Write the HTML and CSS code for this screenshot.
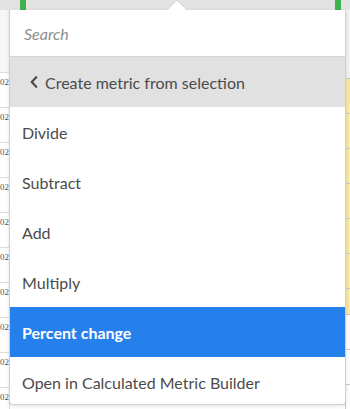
FILE: index.html
```html
<!DOCTYPE html>
<html>
<head>
<meta charset="utf-8">
<link rel="stylesheet" href="styles.css">
</head>
<body>
<div class="backdrop">
  <div class="topstrip">
    <span class="flag flag-left"></span>
    <span class="flag flag-right"></span>
  </div>
  <div class="table">
    <div class="col col-left">
      <div class="cell first"></div>
      <div class="cell"><span>02</span></div>
      <div class="cell"><span>02</span></div>
      <div class="cell"><span>02</span></div>
      <div class="cell"><span>02</span></div>
      <div class="cell"><span>02</span></div>
      <div class="cell"><span>02</span></div>
      <div class="cell"><span>02</span></div>
      <div class="cell"><span>02</span></div>
      <div class="cell"><span>02</span></div>
      <div class="cell"><span>02</span></div>
    </div>
    <div class="col col-right">
      <div class="rcell first"></div>
      <div class="rcell yellow"></div>
      <div class="rcell yellow"></div>
      <div class="rcell yellow"></div>
      <div class="rcell yellow"></div>
      <div class="rcell yellow"></div>
      <div class="rcell yellow"></div>
      <div class="rcell yellow short"></div>
      <div class="rcell"></div>
      <div class="rcell"></div>
    </div>
  </div>
</div>

<svg class="caret" width="22" height="12" viewBox="0 0 22 12">
  <polygon points="0.5,11.5 11,1 21.5,11.5" fill="#ffffff" stroke="#d0d0d0" stroke-width="1"/>
  <rect x="0" y="11" width="22" height="1" fill="#ffffff"/>
</svg>

<div class="popover">
  <div class="search">Search</div>
  <div class="header">
    <svg class="chev" width="8" height="12" viewBox="0 0 8 12">
      <path d="M6.2 1.2 L1.8 6 L6.2 10.8" fill="none" stroke="#4b4b4b" stroke-width="2.2" stroke-linecap="round" stroke-linejoin="round"/>
    </svg>
    <span>Create metric from selection</span>
  </div>
  <ul class="menu">
    <li class="item">Divide</li>
    <li class="item">Subtract</li>
    <li class="item">Add</li>
    <li class="item">Multiply</li>
    <li class="item selected">Percent change</li>
    <li class="item">Open in Calculated Metric Builder</li>
  </ul>
</div>
</body>
</html>
```

FILE: styles.css
```css
html, body {
  margin: 0;
  padding: 0;
}
body {
  width: 350px;
  height: 409px;
  overflow: hidden;
  background: #ffffff;
  font-family: "Lato", "Open Sans", sans-serif;
  position: relative;
}

.backdrop {
  display: flex;
  flex-direction: column;
}
.topstrip {
  height: 10px;
  background: #e3e3e3;
  display: flex;
  justify-content: space-between;
  padding: 0 9px 0 20px;
}
.flag {
  width: 6px;
  height: 10px;
  background: #3fb24f;
}
.table {
  display: flex;
  justify-content: space-between;
}
.col-left {
  width: 9px;
  border-right: 1px solid #d6d6d6;
  display: flex;
  flex-direction: column;
}
.cell {
  height: 34px;
  border-bottom: 1px solid #dcdcdc;
  display: flex;
  align-items: flex-start;
  justify-content: flex-start;
  font-family: "Liberation Serif", serif;
  font-size: 9px;
  line-height: 12px;
  color: #555;
}
.cell.first {
  height: 62px;
  background: #f7f7f7;
}
.cell span {
  padding-top: 3px;
}
.col-right {
  width: 4px;
  border-left: 1px solid #c8c8c8;
  display: flex;
  flex-direction: column;
}
.rcell {
  height: 34px;
  border-bottom: 1px solid #c8c8c8;
}
.rcell.first {
  height: 68px;
  background: #f2f2f2;
}
.rcell.yellow {
  background: #fbeba0;
}
.rcell.short {
  height: 25px;
}

.caret {
  position: absolute;
  left: 166px;
  top: -1px;
  z-index: 2;
}

.popover {
  position: absolute;
  left: 9px;
  top: 10px;
  width: 335px;
  height: 394px;
  background: #ffffff;
  border: 1px solid #cfcfcf;
  border-top: none;
  border-radius: 0 0 4px 4px;
  box-shadow: 0 1px 4px rgba(0, 0, 0, 0.12);
  overflow: hidden;
  color: #4b4b4b;
  font-size: 16px;
}
.search {
  height: 46px;
  display: flex;
  align-items: center;
  padding-left: 14px;
  font-style: italic;
  color: #8e8e8e;
  border-bottom: 1px solid #d4d4d4;
}
.header {
  height: 50px;
  background: #e1e1e1;
  display: flex;
  align-items: center;
  gap: 7px;
  padding-left: 20px;
}
.chev {
  flex: none;
}
.menu {
  list-style: none;
  margin: 0;
  padding: 0;
}
.item {
  height: 50px;
  display: flex;
  align-items: center;
  padding-left: 12px;
}
.item.selected {
  background: #2680eb;
  color: #ffffff;
  font-weight: 700;
}
```
